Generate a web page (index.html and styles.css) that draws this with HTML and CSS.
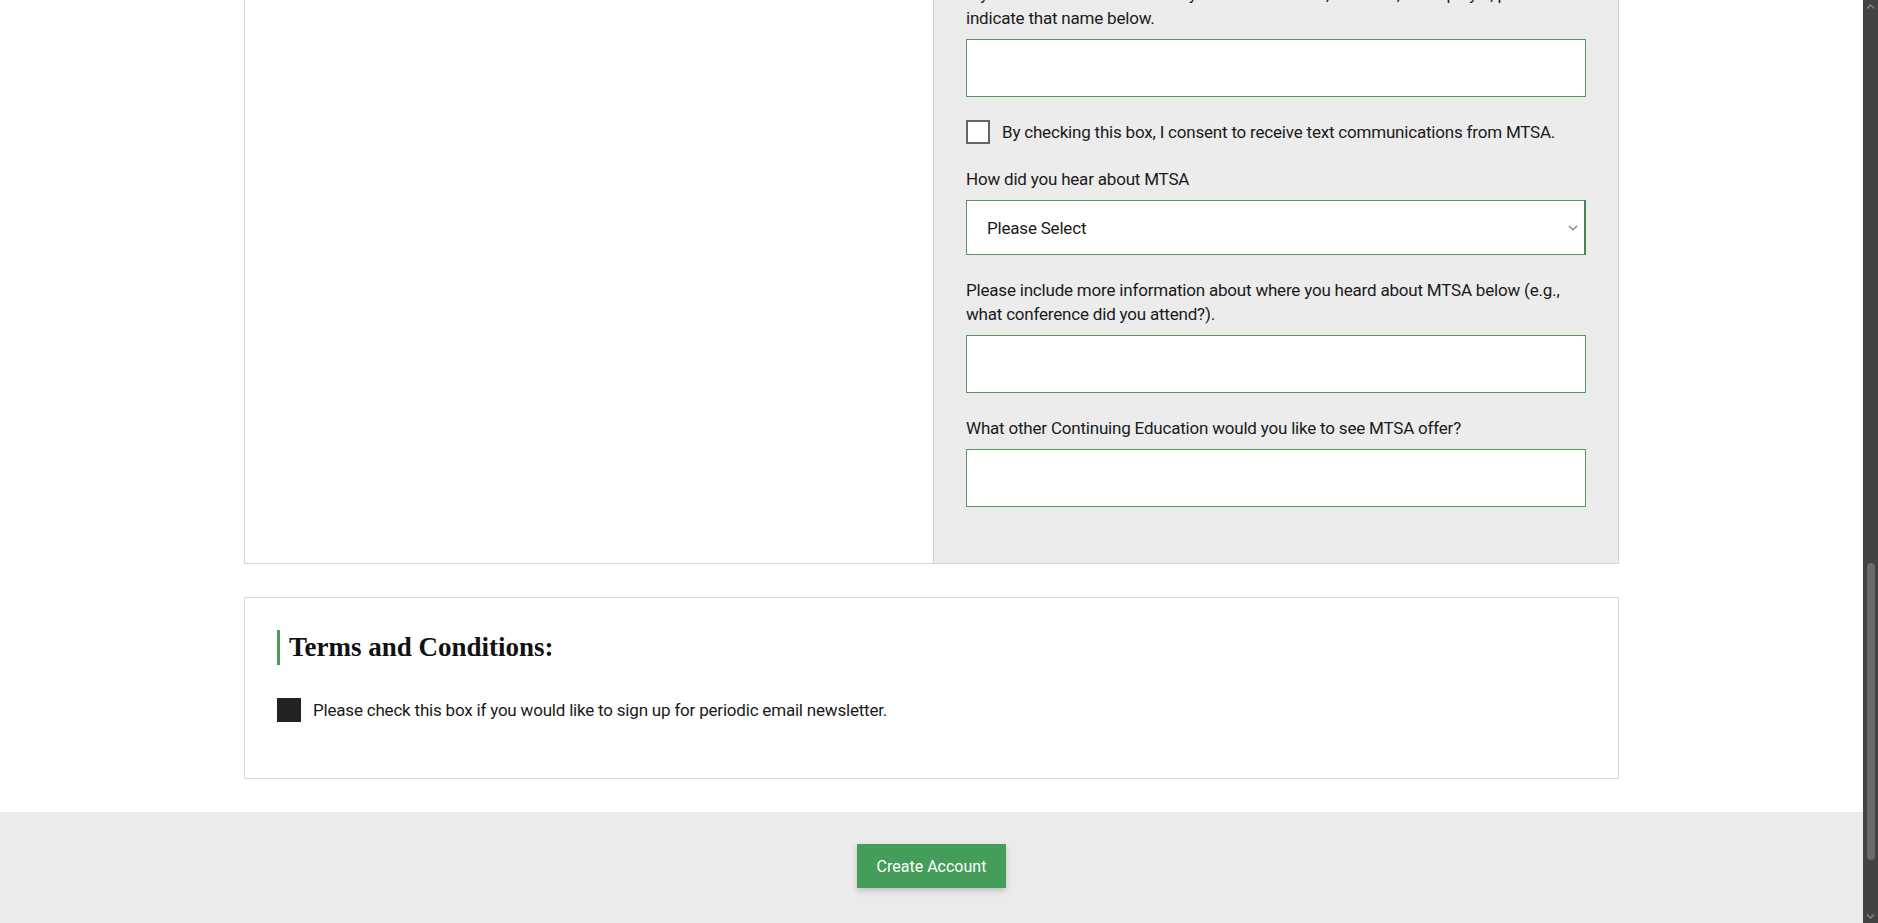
FILE: index.html
```html
<!DOCTYPE html>
<html lang="en">
<head>
    <meta charset="UTF-8">
    <meta name="viewport" content="width=device-width, initial-scale=1.0">
    <title>Create Account - MTSA</title>
    <link rel="stylesheet" href="styles.css">
</head>
<body>
    <div class="page">
        <div class="page-content">
            <!-- Two column form area (top is scrolled out of view) -->
            <div class="form-panels">
                <div class="panel panel-left"></div>

                <div class="panel panel-right">
                    <div class="field">
                        <label>If you were referred to MTSA by a current student, alumnus, or employer, please indicate that name below.</label>
                        <input type="text" class="text-input">
                    </div>

                    <div class="check-row">
                        <span class="checkbox"></span>
                        <span>By checking this box, I consent to receive text communications from MTSA.</span>
                    </div>

                    <div class="field">
                        <label>How did you hear about MTSA</label>
                        <div class="select">
                            <span>Please Select</span>
                            <svg class="chevron" width="10" height="6" viewBox="0 0 10 6"><path d="M1 1l4 4 4-4" fill="none" stroke="#777" stroke-width="1.2"/></svg>
                        </div>
                    </div>

                    <div class="field">
                        <label>Please include more information about where you heard about MTSA below (e.g., what conference did you attend?).</label>
                        <input type="text" class="text-input">
                    </div>

                    <div class="field">
                        <label>What other Continuing Education would you like to see MTSA offer?</label>
                        <input type="text" class="text-input">
                    </div>
                </div>
            </div>

            <!-- Terms -->
            <div class="terms">
                <h2>Terms and Conditions:</h2>
                <div class="check-row">
                    <span class="checkbox checked"></span>
                    <span>Please check this box if you would like to sign up for periodic email newsletter.</span>
                </div>
            </div>

            <div class="footer-bar">
                <button class="btn-create">Create Account</button>
            </div>
        </div>

        <!-- page scrollbar -->
        <div class="scrollbar">
            <svg width="9" height="5" viewBox="0 0 9 5"><path d="M1 4.5l3.5-3.5 3.5 3.5" fill="none" stroke="#888" stroke-width="1.3"/></svg>
            <div class="track"><div class="thumb"></div></div>
            <svg width="9" height="5" viewBox="0 0 9 5"><path d="M1 0.5l3.5 3.5 3.5-3.5" fill="none" stroke="#888" stroke-width="1.3"/></svg>
        </div>
    </div>
</body>
</html>
```

FILE: styles.css
```css
body {
    margin: 0;
    font-family: 'Roboto', 'Liberation Sans', sans-serif;
    font-size: 17px;
    line-height: 24px;
    letter-spacing: -0.2px;
    color: #1a1a1a;
    background-color: #fff;
}

.page {
    display: flex;
    height: 100vh;
    overflow: hidden;
}

.page-content {
    flex: 1;
    display: flex;
    flex-direction: column;
    justify-content: flex-end;
    overflow: hidden;
}

.form-panels {
    width: 1375px;
    margin: 0 auto 33px;
    box-sizing: border-box;
    display: grid;
    grid-template-columns: 688px 1fr;
    border: 1px solid #d4d4d4;
    flex-shrink: 0;
}

.panel {
    padding: 32px;
}

.panel-left {
    background-color: #fff;
}

.panel-right {
    background-color: #ececec;
    border-left: 1px solid #d4d4d4;
    padding-bottom: 33px;
}

.field {
    margin-bottom: 23px;
}

.field label {
    display: block;
    margin-bottom: 9px;
}

.text-input {
    display: block;
    width: 100%;
    height: 58px;
    box-sizing: border-box;
    border: 1px solid #54985f;
    background-color: #fff;
    outline: none;
}

.select {
    display: flex;
    align-items: center;
    justify-content: space-between;
    height: 55px;
    box-sizing: border-box;
    padding: 0 6px 0 20px;
    background-color: #fff;
    border: 1px solid #54985f;
    border-right: 2px solid #4e7f58;
}

.check-row {
    display: flex;
    align-items: center;
    gap: 12px;
    margin-bottom: 23px;
}

.checkbox {
    width: 24px;
    height: 24px;
    box-sizing: border-box;
    border: 2px solid #666;
    background-color: #fff;
    flex-shrink: 0;
}

.checkbox.checked {
    background-color: #222;
    border-color: #222;
}

.terms {
    width: 1375px;
    margin: 0 auto 33px;
    box-sizing: border-box;
    padding: 32px 32px 32px;
    border: 1px solid #d6d6d6;
    flex-shrink: 0;
}

.terms .check-row {
    margin-bottom: 24px;
}

.terms h2 {
    margin: 0 0 33px;
    padding-left: 9px;
    border-left: 3px solid #4e9a5e;
    font-family: 'Liberation Serif', 'DejaVu Serif', serif;
    font-size: 27px;
    line-height: 35px;
    letter-spacing: 0;
    color: #111;
}

.footer-bar {
    background-color: #ebebeb;
    padding: 32px 0 35px;
    text-align: center;
    flex-shrink: 0;
}

.btn-create {
    background-color: #449d58;
    color: #fff;
    border: none;
    height: 44px;
    padding: 0 20px;
    font-family: 'Roboto', sans-serif;
    font-size: 16px;
    box-shadow: 0 3px 6px rgba(0, 0, 0, 0.18);
    cursor: pointer;
}

.scrollbar {
    width: 15px;
    background-color: #434343;
    display: flex;
    flex-direction: column;
    align-items: center;
    padding: 4px 0;
    box-sizing: border-box;
    gap: 4px;
}

.track {
    flex: 1;
    width: 100%;
    display: flex;
    flex-direction: column;
    justify-content: flex-end;
    padding-bottom: 50px;
}

.thumb {
    width: 8px;
    height: 297px;
    margin: 0 auto;
    border-radius: 4px;
    background-color: #6b6b6b;
}
```
